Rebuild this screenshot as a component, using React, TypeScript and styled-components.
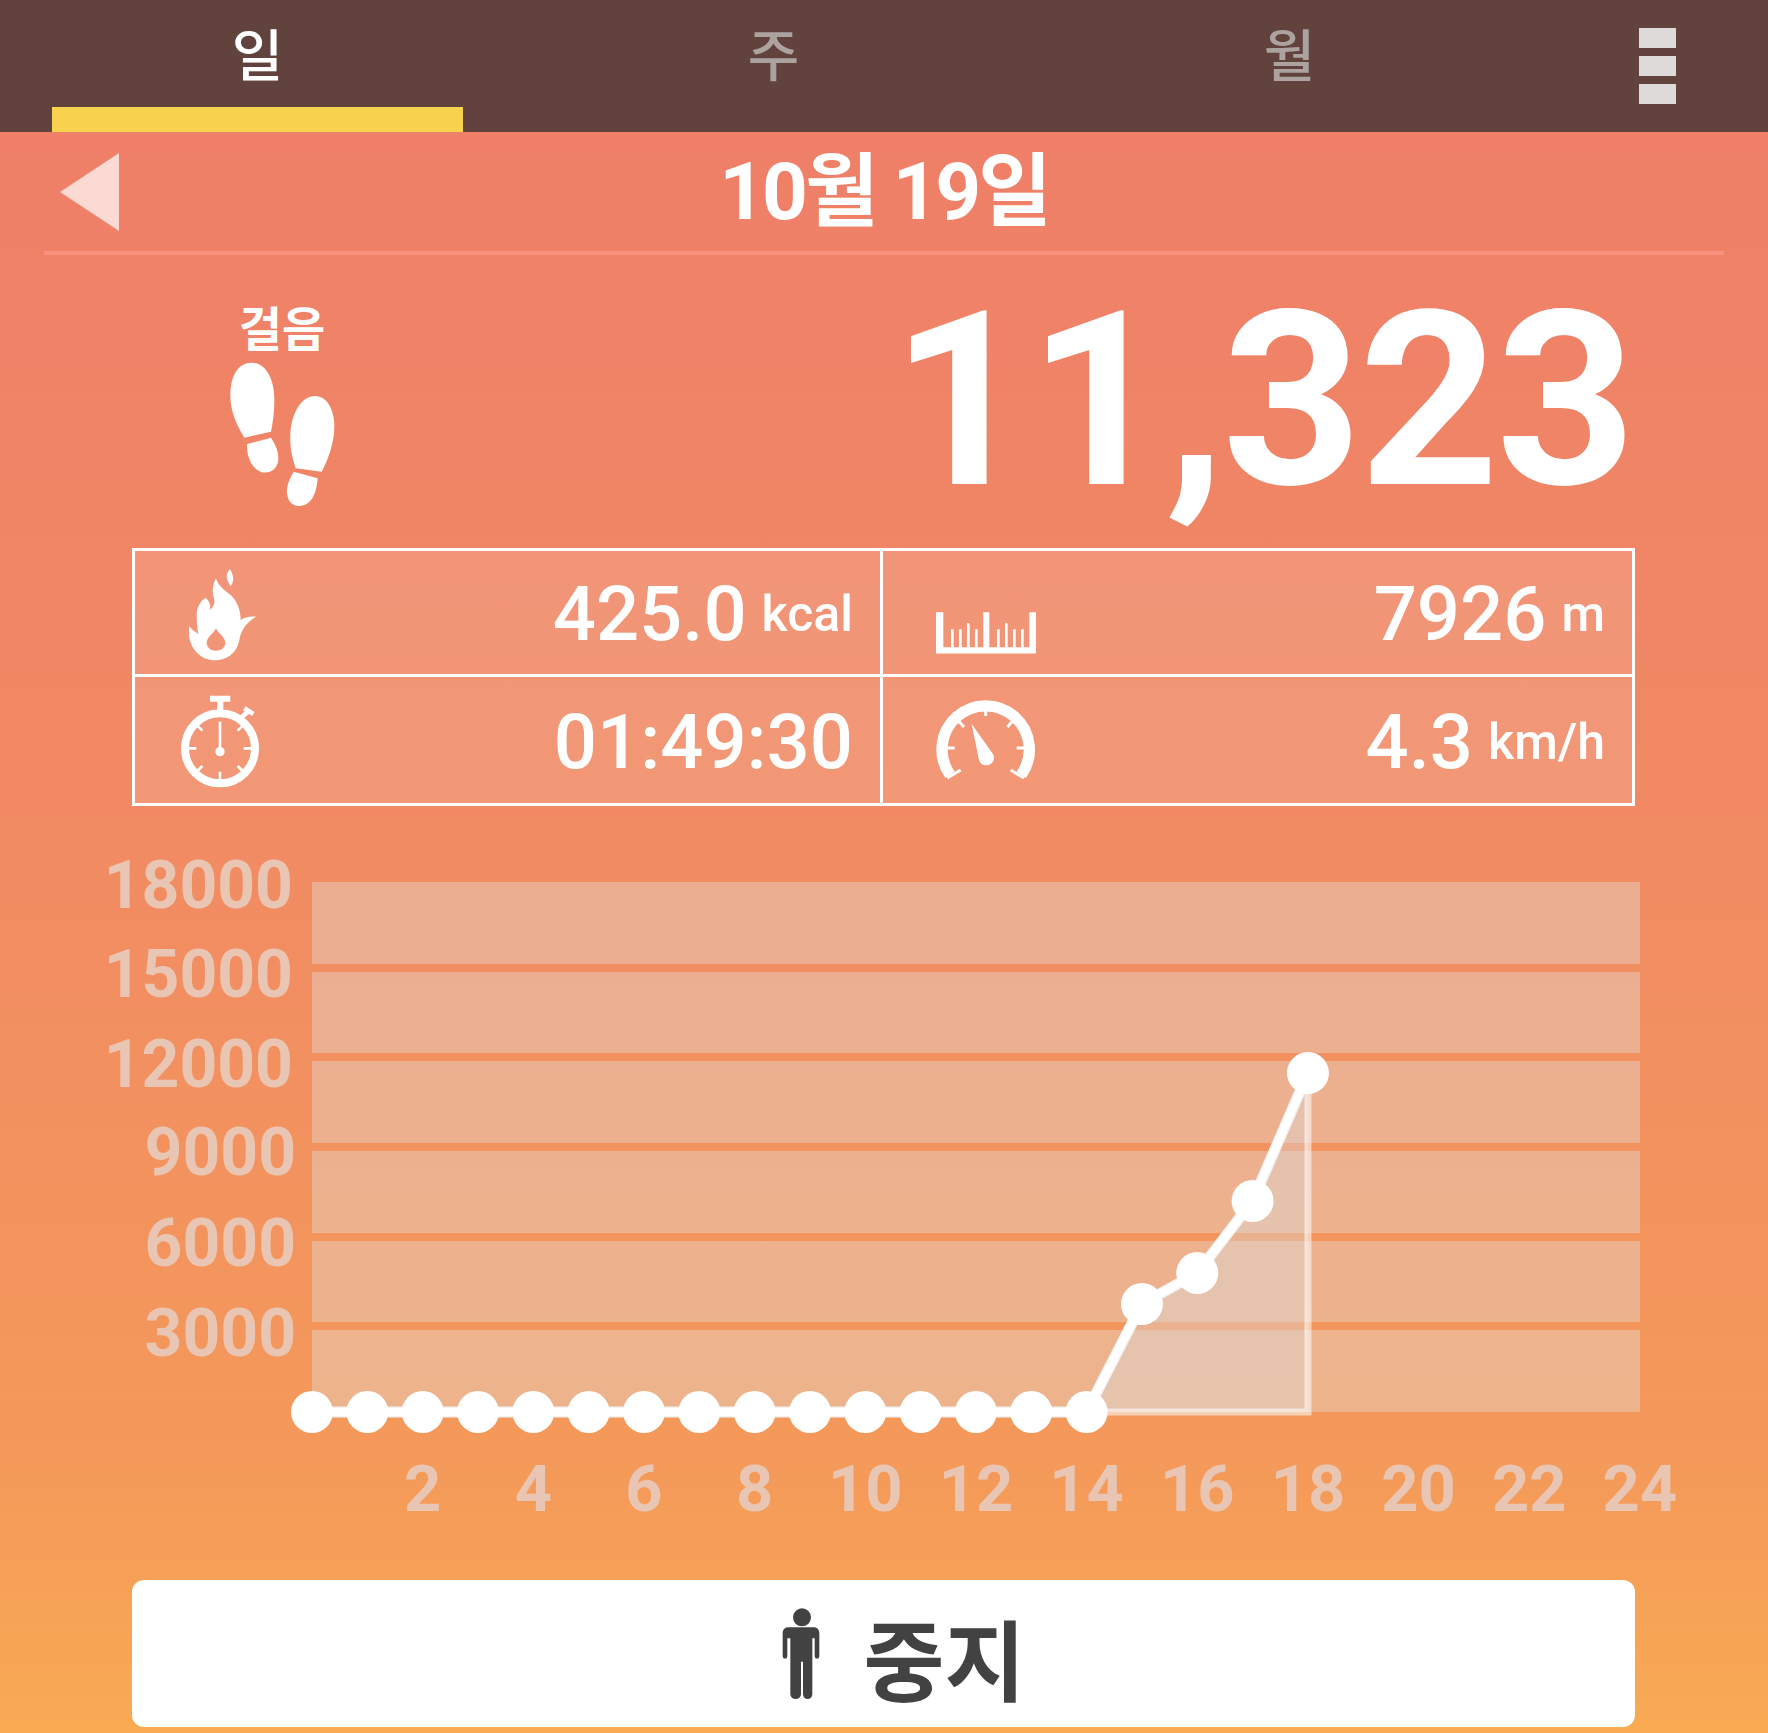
import styled, { createGlobalStyle } from "styled-components";

const GlobalStyle = createGlobalStyle`
  html, body {
    margin: 0;
    padding: 0;
    background: #f9a953;
  }
`;

const Page = styled.div`
  width: 1768px;
  height: 1733px;
  overflow: hidden;
  display: flex;
  flex-direction: column;
  font-family: Roboto, "Noto Sans CJK KR", sans-serif;
  color: #fff;
  background: linear-gradient(180deg, #ef7f68 132px, #f18a64 800px, #f4995a 1450px, #f69f58 1560px, #f9ab53 1733px);
`;

const Header = styled.header`
  height: 132px;
  flex: none;
  display: flex;
  align-items: stretch;
  padding: 0 92px 0 52px;
  background: #61423d;
`;

const Tabs = styled.nav`
  display: grid;
  grid-template-columns: repeat(3, 411px);
  column-gap: 105px;
`;

const Tab = styled.div<{ $active?: boolean }>`
  display: flex;
  justify-content: center;
  padding-top: 19px;
  box-sizing: border-box;
  font-size: 56px;
  line-height: 76px;
  font-weight: 500;
  color: ${(p) => (p.$active ? "#fff" : "#aca3a1")};
  border-bottom: 25px solid ${(p) => (p.$active ? "#f9d24f" : "transparent")};
`;

const Menu = styled.div`
  margin-left: auto;
  padding-top: 28px;
  display: flex;
  flex-direction: column;
  gap: 8px;
`;

const MenuBlock = styled.span`
  width: 37px;
  height: 20px;
  background: #dedad9;
`;

const DateBar = styled.div`
  height: 119px;
  flex: none;
  margin: 0 44px;
  padding: 0 16px;
  display: grid;
  grid-template-columns: 1fr auto 1fr;
  align-items: center;
  border-bottom: 4px solid #f8927f;
`;

const DateTitle = styled.div`
  font-size: 80px;
  line-height: 100px;
  font-weight: 700;
  letter-spacing: -3px;
`;

const StepsRow = styled.section`
  height: 293px;
  flex: none;
  display: flex;
  justify-content: space-between;
  padding: 0 135px 0 227px;
`;

const StepsLabel = styled.div`
  display: flex;
  flex-direction: column;
  align-items: center;
  padding-top: 45px;
  font-size: 47px;
  line-height: 60px;
  font-weight: 700;
`;

const StepsCount = styled.div`
  font-size: 244px;
  line-height: 293px;
  font-weight: 700;
  letter-spacing: -3px;
`;

const Stats = styled.section`
  flex: none;
  margin: 0 133px 0 132px;
  display: grid;
  grid-template-columns: 748px 749px;
  grid-template-rows: 126px 126px;
  border: 3px solid #fff;
  background: rgba(255, 255, 255, 0.12);
`;

const StatCell = styled.div<{ $iconGap: number; $right?: boolean; $last?: boolean }>`
  display: flex;
  align-items: center;
  justify-content: space-between;
  padding: 0 27px 0 ${(p) => p.$iconGap}px;
  border-right: ${(p) => (p.$right ? "0" : "3px solid #fff")};
  border-bottom: ${(p) => (p.$last ? "0" : "3px solid #fff")};
`;

const StatValue = styled.div`
  display: flex;
  align-items: center;
  gap: 15px;
  margin-top: 3px;
  font-size: 76px;
  line-height: 90px;
  font-weight: 500;
`;

const StatUnit = styled.span`
  font-size: 50px;
`;

const Chart = styled.svg`
  flex: none;
  display: block;
  width: 1768px;
  height: 740px;
  margin-top: 24px;
`;

const StopButton = styled.button`
  flex: none;
  height: 147px;
  margin: 10px 133px 0 132px;
  padding: 0 0 0 40px;
  display: flex;
  align-items: center;
  justify-content: center;
  gap: 44px;
  border: 0;
  border-radius: 12px;
  background: #fff;
  color: #424242;
  font-family: inherit;
  font-size: 88px;
  font-weight: 700;
`;

const StopLabel = styled.span`
  margin-top: 4px;
`;

const ArrowIcon = () => (
  <svg width="60" height="78" viewBox="0 0 60 78">
    <path d="M0 39 L59 0 V78 Z" fill="#fcdad3" />
  </svg>
);

const FeetIcon = () => (
  <svg width="110" height="150" viewBox="320 210 330 450" fill="#fff">
    <path d="M372 443 C348 403 330 365 330 315 C330 255 355 218 393 218 C435 218 462 265 462 330 C462 365 458 395 452 425 Z" />
    <path d="M380 462 L452 443 C470 470 478 495 472 520 C464 545 440 552 420 545 C395 535 378 500 380 462 Z" />
    <path d="M526 535 C514 500 508 470 510 430 C514 365 545 318 585 318 C620 318 642 360 642 410 C642 455 625 505 604 545 Z" />
    <path d="M520 545 L592 565 C590 590 584 625 562 640 C540 655 510 650 502 620 C495 595 505 570 520 545 Z" />
  </svg>
);

const FlameIcon = () => (
  <svg width="90" height="110" viewBox="0 0 270 330" fill="#fff" style={{ marginTop: 4 }}>
    <path
      fillRule="evenodd"
      d="M108 55 C98 75 95 95 102 115 C106 128 100 142 90 150 C92 138 90 122 76 114 C60 125 50 142 50 165 C50 182 52 205 55 222 C45 216 34 208 28 198 C24 225 28 252 48 275 C66 295 90 303 115 300 C150 296 172 272 178 240 C182 215 195 190 228 170 C210 168 192 172 182 180 C182 150 172 125 152 105 C134 92 115 78 108 55 Z M108 205 C100 222 80 232 80 248 C80 262 92 272 108 272 C124 272 136 262 136 248 C136 232 116 222 108 205 Z"
    />
    <path d="M150 28 C138 40 135 55 152 78 C166 60 158 42 150 28 Z" />
  </svg>
);

const StopwatchIcon = () => (
  <svg width="80" height="94" viewBox="165 465 240 282" fill="none" stroke="#fff" style={{ marginTop: 4 }}>
    <circle cx="285" cy="625" r="105" strokeWidth="24" />
    <path d="M286 510 V478 M255 476 H316" strokeWidth="18" />
    <path d="M350 532 L372 512 M358 505 L385 522" strokeWidth="14" />
    <path d="M285 695 V725 M190 625 H214 M356 625 H380 M214 554 L232 572 M356 696 L338 678 M214 696 L232 678 M356 554 L338 572" strokeWidth="8" />
    <path d="M285 545 V630" strokeWidth="8" />
    <circle cx="285" cy="635" r="14" fill="#fff" stroke="none" />
  </svg>
);

const RulerIcon = () => (
  <svg width="100" height="42" viewBox="198 217 300 125" fill="#fff" style={{ marginTop: 40 }}>
    <path d="M198 217 H220 V322 H340 V217 H358 V322 H478 V217 H498 V341 H198 Z" />
    <path d="M243 268 h8 v54 h-8 Z M267 268 h8 v54 h-8 Z M291 250 h8 v72 h-8 Z M315 268 h8 v54 h-8 Z M381 268 h8 v54 h-8 Z M405 250 h8 v72 h-8 Z M429 268 h8 v54 h-8 Z M453 268 h8 v54 h-8 Z" />
  </svg>
);

const GaugeIcon = () => (
  <svg width="100" height="82" viewBox="198 484 300 244" fill="none" stroke="#fff">
    <path d="M240 710 A131 131 0 1 1 454 710" strokeWidth="34" />
    <path d="M347 500 V534 M260 543 L282 567 M434 543 L412 567 M226 630 H254 M440 630 H470 M232 720 L272 696 M462 720 L422 696" strokeWidth="9" />
    <path d="M305 558 L326 662 A23 23 0 1 0 369 648 Z" fill="#fff" stroke="none" />
  </svg>
);

const PersonIcon = () => (
  <svg width="38" height="92" viewBox="132 149 112 276" fill="#424242">
    <circle cx="191" cy="177" r="27" />
    <path d="M150 207 H226 C237 207 243 214 243 226 V294 A7 7 0 0 1 229 294 V240 H222 V408 A14 14 0 0 1 194 408 V310 H188 V408 A16 14 0 0 1 156 408 V240 H147 V294 A7 7 0 0 1 133 294 V226 C133 214 139 207 150 207 Z" />
  </svg>
);

const X_START = 312;
const X_STEP = 55.33;
const CHART_TOP = 830;
const BASE_Y = 1412 - CHART_TOP;

const bandTops = [882, 972, 1061, 1151, 1241, 1330];
const bandBottoms = [964, 1053, 1143, 1233, 1322, 1412];
const yLabels = [
  { text: "18000", y: 883, x: 293 },
  { text: "15000", y: 972, x: 293 },
  { text: "12000", y: 1062, x: 293 },
  { text: "9000", y: 1150, x: 296 },
  { text: "6000", y: 1241, x: 296 },
  { text: "3000", y: 1331, x: 296 },
];
const xLabels = [2, 4, 6, 8, 10, 12, 14, 16, 18, 20, 22, 24];

const hourlyY = [
  ...Array.from({ length: 15 }, () => BASE_Y),
  1304 - CHART_TOP,
  1273 - CHART_TOP,
  1201 - CHART_TOP,
  1073 - CHART_TOP,
];
const points = hourlyY.map((y, i) => ({ x: X_START + X_STEP * i, y }));
const rising = points.slice(14);
const risingPath = rising.map((p) => `${p.x},${p.y}`).join(" ");
const linePath = points.map((p) => `${p.x},${p.y}`).join(" ");
const lastX = points[points.length - 1].x;

const labelFont = { fontFamily: "Roboto, sans-serif", fontWeight: 700, fill: "#e9c6b3" };

const StepsChart = () => (
  <Chart viewBox="0 0 1768 740">
    {bandTops.map((top, i) => (
      <rect
        key={top}
        x={X_START}
        y={top - CHART_TOP}
        width={1640 - X_START}
        height={bandBottoms[i] - top}
        fill="#e3ded6"
        fillOpacity={0.4}
      />
    ))}
    {yLabels.map((l) => (
      <text key={l.text} x={l.x} y={l.y - CHART_TOP + 25} textAnchor="end" fontSize={66} {...labelFont}>
        {l.text}
      </text>
    ))}
    {xLabels.map((n) => (
      <text
        key={n}
        x={X_START + X_STEP * n}
        y={1511 - CHART_TOP}
        textAnchor="middle"
        fontSize={65}
        {...labelFont}
      >
        {n}
      </text>
    ))}
    <polygon
      points={`${risingPath} ${lastX},${BASE_Y} ${points[14].x},${BASE_Y}`}
      fill="#dddddd"
      fillOpacity={0.4}
      stroke="#fff"
      strokeOpacity={0.55}
      strokeWidth={7}
    />
    <polyline points={linePath} fill="none" stroke="#f2f2f2" strokeWidth={11} />
    <polyline points={linePath} fill="none" stroke="#fff" strokeWidth={8} />
    {points.map((p) => (
      <circle key={p.x} cx={p.x} cy={p.y} r={21} fill="#fff" />
    ))}
  </Chart>
);

const App = () => {
  return (
    <Page>
      <GlobalStyle />
      <Header>
        <Tabs>
          <Tab $active>일</Tab>
          <Tab>주</Tab>
          <Tab>월</Tab>
        </Tabs>
        <Menu>
          <MenuBlock />
          <MenuBlock />
          <MenuBlock />
        </Menu>
      </Header>
      <DateBar>
        <ArrowIcon />
        <DateTitle>10월 19일</DateTitle>
      </DateBar>
      <StepsRow>
        <StepsLabel>
          걸음
          <FeetIcon />
        </StepsLabel>
        <StepsCount>11,323</StepsCount>
      </StepsRow>
      <Stats>
        <StatCell $iconGap={45}>
          <FlameIcon />
          <StatValue>
            425.0<StatUnit>kcal</StatUnit>
          </StatValue>
        </StatCell>
        <StatCell $iconGap={53} $right>
          <RulerIcon />
          <StatValue>
            7926<StatUnit>m</StatUnit>
          </StatValue>
        </StatCell>
        <StatCell $iconGap={45} $last>
          <StopwatchIcon />
          <StatValue>01:49:30</StatValue>
        </StatCell>
        <StatCell $iconGap={53} $right $last>
          <GaugeIcon />
          <StatValue>
            4.3<StatUnit>km/h</StatUnit>
          </StatValue>
        </StatCell>
      </Stats>
      <StepsChart />
      <StopButton>
        <PersonIcon />
        <StopLabel>중지</StopLabel>
      </StopButton>
    </Page>
  );
};

export default App;
